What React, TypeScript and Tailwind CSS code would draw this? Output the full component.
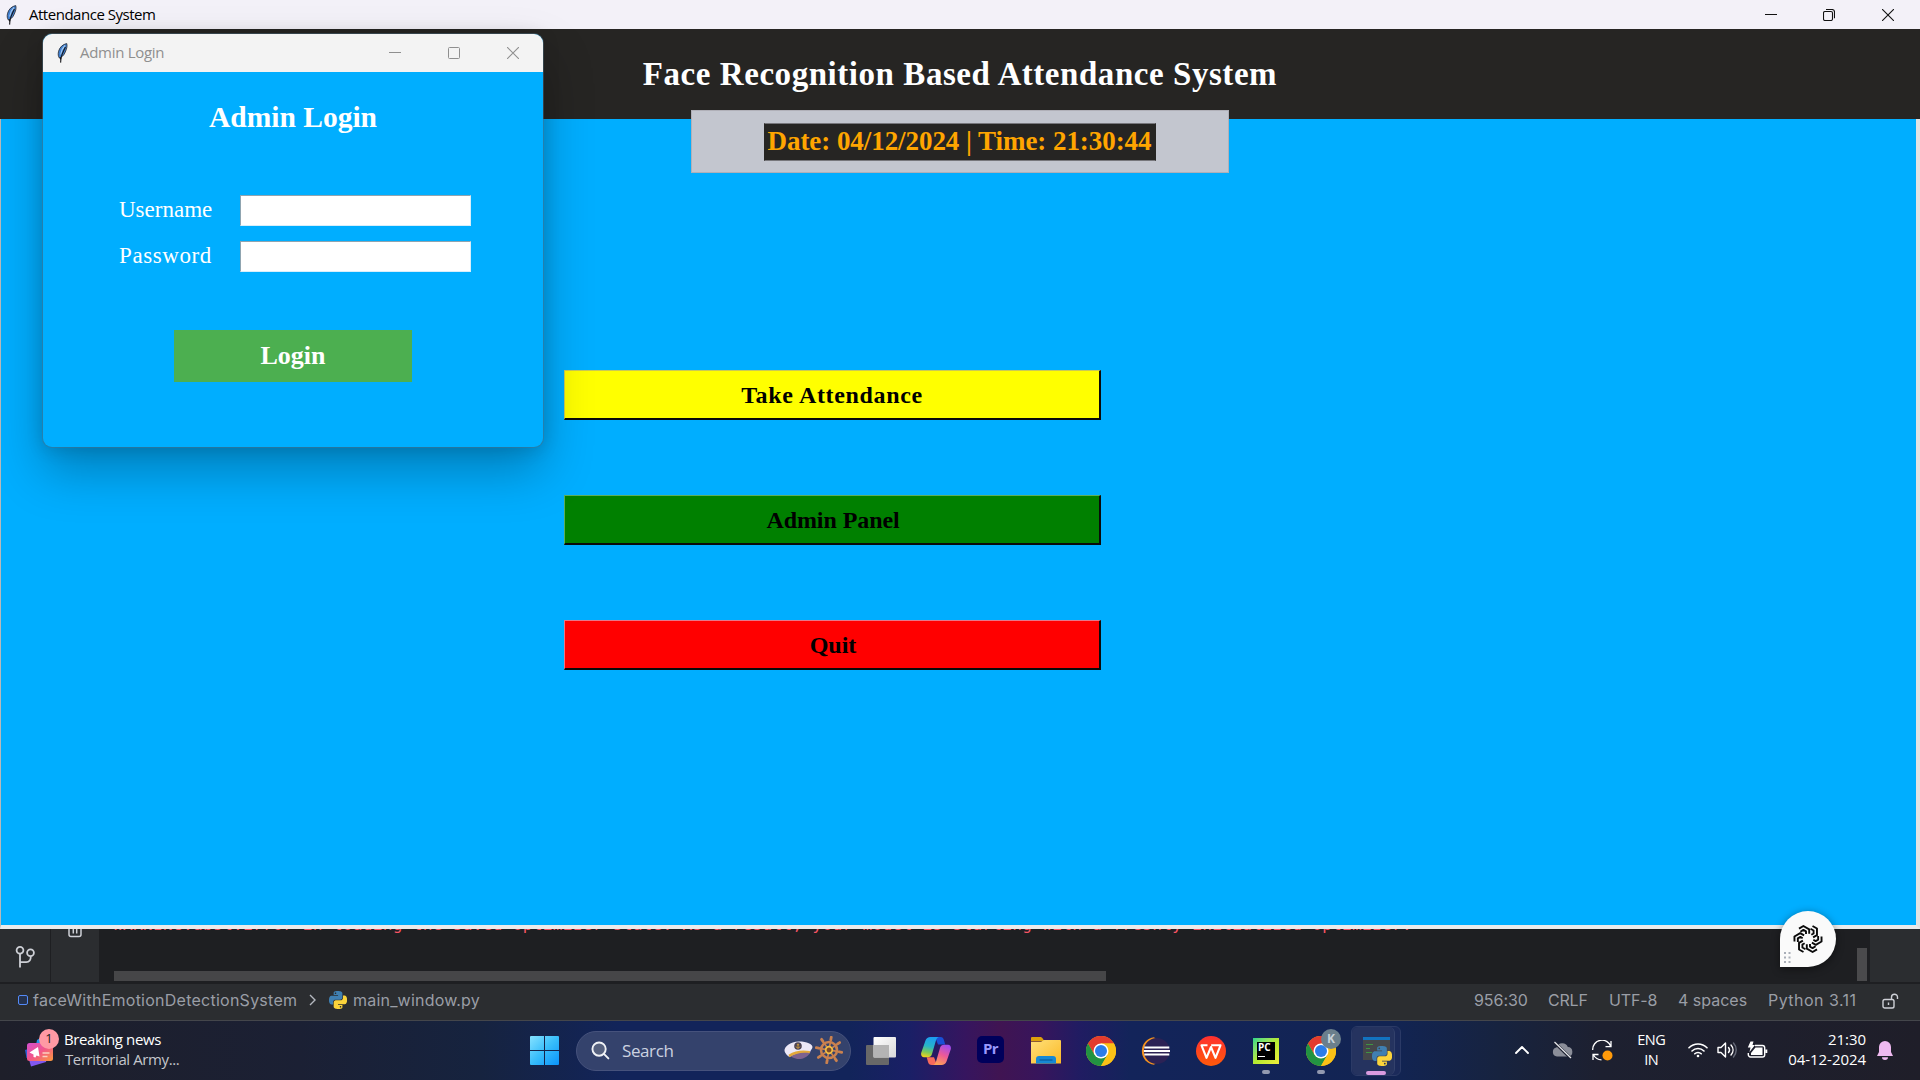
import React from "react";

type P = { className?: string };

const Feather = ({ className }: P) => (
  <svg className={className} viewBox="0 0 12 20" fill="none">
    <path d="M9.8.6C6 1.2 2.6 4.200 1.600 8.200c-.8 3-.4 5.300.8 6.800 2.400-.7 4.600-2.800 5.800-5.800C9.600 6 10.500 3.500 9.800.6Z" fill="#3f7fd0" stroke="#26282e" strokeWidth=".8" />
    <path d="M8 2.500C5.500 5 4.200 8 3.600 11.500" stroke="#a9cdf3" strokeWidth="1.100" />
    <path d="M8.400 4C6.600 8 4.800 11 4 15l-.4 4.600" stroke="#15161a" strokeWidth="1.100" />
    <path d="M2.400 14.500l1.200 2.800 1-2.600Z" fill="#15161a" />
  </svg>
);

const Python = ({ className }: P) => (
  <svg className={className} viewBox="0 0 24 24">
    <path fill="#3f7fb1" d="M14.25.18l.9.2.73.26.59.3.45.32.34.34.25.34.16.33.1.3.04.26.02.2-.01.13V8.500l-.05.63-.13.55-.21.46-.26.38-.3.31-.33.25-.35.19-.35.14-.33.1-.3.07-.26.04-.21.02H8.770l-.69.05-.59.14-.5.22-.41.27-.33.32-.27.35-.2.36-.15.37-.1.35-.07.32-.04.27-.02.21v3.060H3.170l-.21-.03-.28-.07-.32-.12-.35-.18-.36-.26-.36-.36-.35-.46-.32-.59-.28-.73-.21-.88-.14-1.050L0 11.970l.06-1.220.16-1.040.24-.87.32-.71.36-.57.4-.44.42-.33.42-.24.4-.16.36-.1.32-.05.24-.01h.16l.06.010h8.160v-.83H6.240l-.01-2.750-.02-.37.05-.34.11-.31.17-.28.25-.26.31-.23.38-.2.44-.18.51-.15.58-.12.64-.1.71-.06.77-.04.84-.02 1.270.05 1.070.13zm-6.300 1.980l-.23.33-.08.41.08.410.23.34.33.22.41.09.41-.09.33-.22.23-.34.08-.41-.08-.41-.23-.33-.33-.22-.41-.09-.41.09-.33.22z" />
    <path fill="#fbd43b" d="M21.100 6.110l.28.060.32.120.35.180.36.270.36.350.35.470.32.590.28.730.21.880.14 1.040.05 1.230-.06 1.230-.16 1.040-.24.860-.32.710-.36.570-.4.450-.42.330-.42.240-.4.160-.36.090-.32.050-.24.020-.16-.010h-8.220v.820h5.840l.010 2.760.020.360-.05.340-.11.310-.17.290-.25.250-.31.240-.38.200-.44.170-.51.150-.58.130-.64.090-.71.070-.77.040-.84.010-1.270-.04-1.070-.14-.9-.2-.73-.25-.59-.3-.45-.33-.34-.34-.25-.34-.16-.33-.1-.3-.04-.25-.02-.2.010-.13v-5.340l.05-.64.13-.54.21-.46.26-.38.3-.32.33-.24.35-.2.35-.14.33-.1.3-.06.26-.04.21-.02.130-.010h5.840l.69-.05.59-.14.5-.21.41-.28.33-.32.27-.35.2-.36.15-.36.1-.35.07-.32.04-.28.020-.21V6.070h2.090l.14.010zm-6.470 14.250l-.23.330-.08.410.08.410.23.330.33.230.41.080.41-.08.33-.23.23-.33.08-.41-.08-.41-.23-.33-.33-.23-.41-.08-.41.080-.33.230z" />
  </svg>
);

const Chrome = ({ className }: P) => (
  <svg className={className} viewBox="0 0 30 30">
    <circle cx="15" cy="15" r="15" fill="#fbc116" />
    <path d="M2 7.500A15 15 0 0 1 28 7.500H15L8.500 18.750Z" fill="#e33b2e" />
    <path d="M2 7.500A15 15 0 0 0 15 30l6.500-11.250H8.500Z" fill="#229342" />
    <path d="M28 7.500H15v7.500l6.500 3.750L15 30A15 15 0 0 0 28 7.500Z" fill="#fbc116" />
    <circle cx="15" cy="15" r="7.500" fill="#fff" />
    <circle cx="15" cy="15" r="6" fill="#2b7de9" />
  </svg>
);

const Minimize = () => (
  <svg className="h-3 w-3" viewBox="0 0 12 12" stroke="currentColor"><path d="M0 5.500h12" /></svg>
);
const Maximize = () => (
  <svg className="h-3 w-3" viewBox="0 0 12 12" fill="none" stroke="currentColor"><rect x=".5" y=".5" width="11" height="11" rx="1" /></svg>
);
const Restore = () => (
  <svg className="h-3 w-3" viewBox="0 0 12 12" fill="none" stroke="currentColor" strokeWidth="1.100">
    <rect x=".5" y="2.500" width="9" height="9" rx="1.500" />
    <path d="M3 .5h6a2.500 2.500 0 0 1 2.500 2.500v6.300" />
  </svg>
);
const Close = () => (
  <svg className="h-3 w-3" viewBox="0 0 12 12" stroke="currentColor" strokeWidth="1.100"><path d="M0 0l12 12M12 0L0 12" /></svg>
);

const menu = [
  { label: "Take Attendance", cls: "bg-[#ffff00] border-t-[#c9c956] border-l-[#c9c956] tracking-[0.66px]" },
  { label: "Admin Panel", cls: "bg-[#008000] border-t-[#5cae5c] border-l-[#5cae5c] tracking-[-0.08px] pl-[2px]" },
  { label: "Quit", cls: "bg-[#ff0000] border-t-[#e8788a] border-l-[#e8788a] pl-[2px]" },
];

function MainWindow() {
  return (
    <section className="flex h-[929px] flex-col">
      <div className="flex h-[29px] shrink-0 items-center bg-[#f3f1f8] pl-[6px] pr-[26px] font-['Open_Sans',sans-serif] text-black">
        <Feather className="h-5 w-3" />
        <span className="ml-[11px] text-[15px] leading-none tracking-[-0.48px]">Attendance System</span>
        <div className="ml-auto flex text-[#111]">
          <Minimize />
          <span className="ml-[46px]"><Restore /></span>
          <span className="ml-[47px]"><Close /></span>
        </div>
      </div>
      <header className="flex h-[90px] shrink-0 items-center justify-center bg-[#262523]">
        <h1 className="text-[33px] font-bold leading-none tracking-[0.55px] text-white">Face Recognition Based Attendance System</h1>
      </header>
      <main className="flex flex-1 flex-col border-b-4 border-l-[1.500px] border-r-4 border-b-[#ebebeb] border-l-[#b9b9b9] border-r-[#e3e3e3] bg-[#00aeff]">
        <div className="z-10 -mt-[9px] ml-[690px] flex h-[63px] w-[538px] items-center justify-center border border-[#b0b0b8] bg-[#c3c6cf]">
          <div className="-ml-px flex h-[38px] w-[392px] items-center justify-center border border-[#77777c] border-x-[#262523] bg-[#262523] text-[27px] font-bold leading-none tracking-[-0.06px] text-[#ffa500]">
            Date: 04/12/2024 | Time: 21:30:44
          </div>
        </div>
        <nav className="ml-[563px] mt-[197px] flex w-[537px] flex-col gap-[75px]">
          {menu.map((m) => (
            <button key={m.label} className={"flex h-[50px] items-center justify-center border-b-2 border-l border-r-2 border-t border-b-[#0a0a0a] border-r-[#0a0a0a] text-[24px] font-bold leading-none text-black " + m.cls}>
              {m.label}
            </button>
          ))}
        </nav>
      </main>
    </section>
  );
}

function LoginWindow() {
  return (
    <section className="absolute left-[43px] top-[34px] z-20 flex h-[413px] w-[500px] flex-col overflow-hidden rounded-[9px] bg-[#00aeff] shadow-[0_0_0_1px_rgba(80,110,130,0.45),0_2px_18px_rgba(0,0,0,0.14),0_24px_50px_rgba(0,0,0,0.27)]">
      <div className="flex h-[38px] shrink-0 items-center bg-[#f3f3f3] pb-px pl-[14px] pr-6 font-['Open_Sans',sans-serif] text-[#8f8f8f]">
        <Feather className="h-5 w-3" />
        <span className="ml-[11px] text-[15px] leading-none tracking-[-0.3px]">Admin Login</span>
        <div className="ml-auto flex gap-[47px]">
          <Minimize />
          <Maximize />
          <Close />
        </div>
      </div>
      <h2 className="mt-[30px] text-center text-[29.500px] font-bold leading-[30px] text-white">Admin Login</h2>
      <form className="ml-[76px] mt-[63px] flex flex-col gap-[15px] text-[23px] text-white">
        <label className="flex h-[31px] items-center">
          <span className="w-[121px] pb-[2px] leading-none">Username</span>
          <span className="h-[31px] w-[231px] border border-[#d8eefa] border-l-[#8fa4b0] border-t-[#8fa4b0] bg-white" />
        </label>
        <label className="flex h-[31px] items-center">
          <span className="w-[121px] pb-[2px] leading-none tracking-[0.6px]">Password</span>
          <span className="h-[31px] w-[231px] border border-[#d8eefa] border-l-[#8fa4b0] border-t-[#8fa4b0] bg-white" />
        </label>
      </form>
      <button className="ml-[131px] mt-[58px] flex h-[52px] w-[238px] items-center justify-center bg-[#4caf50] text-[26px] font-bold leading-none text-white">Login</button>
    </section>
  );
}

function Editor() {
  return (
    <section className="flex h-[92px] flex-col bg-[#1e1f22] font-['Inter',sans-serif]">
      <div className="flex h-[53px] overflow-hidden">
        <div className="flex w-[50px] flex-col items-center bg-[#2b2d30] pt-[16px]">
          <svg className="h-6 w-6" viewBox="0 0 24 24" fill="none" stroke="#ced0d6" strokeWidth="1.800">
            <circle cx="7" cy="5.200" r="3.400" />
            <circle cx="17.500" cy="7.800" r="3.400" />
            <path d="M7 8.500v14M17.800 11.500c0 4-1.800 5.600-4.500 5.600H7" />
          </svg>
        </div>
        <div className="ml-px flex w-12 justify-center bg-[#2b2d30]">
          <svg className="h-[9px] w-4" viewBox="0 0 16 9" fill="none" stroke="#ced0d6" strokeWidth="1.500">
            <path d="M2 -2v7.500a2 2 0 0 0 2 2h8a2 2 0 0 0 2-2V-2M6.300 -1v5.500M9.700 -1v5.500" />
          </svg>
        </div>
        <div className="flex flex-1 flex-col overflow-hidden pl-[14px]">
          <div className="-mt-[12px] h-4 whitespace-pre font-['DejaVu_Sans_Mono',monospace] text-[16px] leading-4 tracking-[0.36px] text-[#f75464]">
            WARNING:absl:Error in loading the saved optimizer state. As a result, your model is starting with a freshly initialized optimizer.
          </div>
          <div className="ml-px mt-[38px] h-[10px] w-[992px] bg-[#464648]" />
        </div>
        <div className="mr-[3px] mt-[19px] h-[33px] w-[10px] bg-[#4a4a4c]" />
        <div className="w-[50px] bg-[#2b2d30]" />
      </div>
      <div className="mt-[2px] flex h-[37px] items-center border-b border-[#44464b] bg-[#2b2d30] pb-[4px] text-[16px] leading-none text-[#9a9ea6]">
        <span className="ml-[18px] h-[10px] w-[10px] rounded-[2px] border-[1.500px] border-[#548af7] bg-[#25324d]" />
        <span className="ml-[5px] w-[264px] tracking-[0.25px]">faceWithEmotionDetectionSystem</span>
        <svg className="ml-[12px] h-3 w-[7px]" viewBox="0 0 7 12" fill="none" stroke="#b4b8bf" strokeWidth="1.400"><path d="M1 1l5 5-5 5" /></svg>
        <Python className="ml-[13px] h-[18px] w-[18px]" />
        <span className="ml-[6px] tracking-[0.2px]">main_window.py</span>
        <div className="ml-auto flex items-center">
          <span className="w-[74px] tracking-[-0.05px]">956:30</span>
          <span className="w-[61px] tracking-[-0.2px]">CRLF</span>
          <span className="w-[69px] tracking-[-0.15px]">UTF-8</span>
          <span className="w-[90px]">4 spaces</span>
          <span className="w-[114px] tracking-[0.46px]">Python 3.11</span>
          <svg className="mr-[21px] mt-[2px] h-4 w-[17px]" viewBox="0 0 17 16" fill="none" stroke="#ced0d6" strokeWidth="1.400">
            <rect x="1" y="6.500" width="11" height="8.500" rx="1.800" />
            <path d="M9.500 6.500V4.200a3 3 0 0 1 6 0V6M6.500 9.500v2.600" />
          </svg>
        </div>
      </div>
    </section>
  );
}

function AssistantBadge() {
  return (
    <div className="absolute left-[1780px] top-[911px] z-20 flex h-14 w-14 items-center justify-center rounded-full rounded-bl-[3px] bg-[#fafafa] shadow-[0_2px_8px_rgba(0,0,0,0.45)]">
      <svg className="-mt-px h-[30px] w-[30px]" viewBox="-15 -15 30 30" fill="none" stroke="#0a0a0a" strokeWidth="1.900" strokeLinejoin="round">
        {[0, 60, 120, 180, 240, 300].map((a) => (
          <g key={a} transform={`rotate(${a})`}>
            <path d="M-9 -10.400L-4.600 -13L1.200 -9.700V-5.200" />
            <path d="M-7.600 -7.300L-4.600 -9.100L-2 -7.600V-5" />
          </g>
        ))}
      </svg>
      <svg className="absolute bottom-[4px] left-[4px] h-[11px] w-[7px]" viewBox="0 0 7 11" fill="#a9aeb8">
        {[0, 4.500, 9].map((y) => (
          <g key={y}><rect x="0" y={y} width="2" height="2" /><rect x="4.500" y={y} width="2" height="2" /></g>
        ))}
      </svg>
    </div>
  );
}

const Windows = () => (
  <svg className="h-[29px] w-[29px]" viewBox="0 0 29 29">
    <defs><linearGradient id="win" x2="1" y2="1"><stop stopColor="#86e2ff" /><stop offset=".5" stopColor="#38bdfb" /><stop offset="1" stopColor="#0a93fb" /></linearGradient></defs>
    <path fill="url(#win)" d="M1 0h13v14H0V1a1 1 0 0 1 1-1ZM15 0h13a1 1 0 0 1 1 1v13H15ZM0 15h14v14H1a1 1 0 0 1-1-1ZM15 15h14v13a1 1 0 0 1-1 1H15Z" />
  </svg>
);

const CaptainHat = () => (
  <svg className="h-[19px] w-[29px]" viewBox="0 0 29 19">
    <path d="M4 12c4 7 16 9 22 0l1-3Z" fill="#7d628f" />
    <path d="M.5 10C0 6 6 .5 15 .5c8 0 13.500 2.500 13.500 5.500 0 2-2 3-2.500 5-7-1-14 0-20.500 5C3.500 15 1 12.500.5 10Z" fill="#ece8f7" />
    <path d="M4.500 13.800C11 9.500 18 8.800 26 10l-.3 2.200C18 11 11 12.500 5.500 16.200Z" fill="#e2a83a" />
    <circle cx="14" cy="5" r="3.800" fill="#4b4354" />
    <path d="M14 2.500v5M12 5.500c.5 2 3.500 2 4 0M12.800 3.800h2.400" stroke="#e2a83a" strokeWidth=".8" fill="none" />
  </svg>
);

const Wheel = () => (
  <svg className="h-[28px] w-[28px]" viewBox="-14 -14 28 28" fill="none" stroke="#c9814f">
    {[10, 55, 100, 145, 190, 235, 280, 325].map((a) => (
      <g key={a} transform={`rotate(${a})`}>
        <path d="M0 -4V-11" strokeWidth="1.700" />
        <path d="M0 -10.500V-13" strokeWidth="2.800" strokeLinecap="round" />
      </g>
    ))}
    <circle r="8" strokeWidth="2.600" />
    <circle r="3.300" stroke="#f0bd45" strokeWidth="1.800" fill="#7c4a2c" />
  </svg>
);

const TaskView = () => (
  <svg className="h-7 w-[30px]" viewBox="0 0 30 28">
    <defs><linearGradient id="tv" x2="1" y2="1"><stop stopColor="#fff" /><stop offset="1" stopColor="#d8d8d8" /></linearGradient></defs>
    <rect x="0" y="8" width="23" height="20" rx="1" fill="#686868" />
    <rect x="7.500" y="0" width="22.500" height="20.500" rx="1" fill="url(#tv)" />
    <path d="M7.500 8H23v12.500H7.500Z" fill="#b4b4b4" />
  </svg>
);

const Copilot = () => (
  <svg className="h-[28px] w-[30px]" viewBox="0 0 30 28">
    <defs>
      <linearGradient id="cp1" x1=".5" x2=".3" y2="1"><stop stopColor="#1c9df0" /><stop offset=".45" stopColor="#28b4c8" /><stop offset=".75" stopColor="#7cc95a" /><stop offset="1" stopColor="#f2d21c" /></linearGradient>
      <linearGradient id="cp2" x1=".7" x2=".3" y2="1"><stop stopColor="#a24bee" /><stop offset=".5" stopColor="#ee5a96" /><stop offset="1" stopColor="#fca355" /></linearGradient>
    </defs>
    <path d="M14 0h5.500c2 0 2.800 1 3.400 3l1.300 4.500H17Z" fill="#1a4fd6" />
    <path d="M16 28h-5c-2.500 0-3.500-1-4-3l-1.300-4.800H13Z" fill="#f66a5c" />
    <path d="M9.500 0H18c-1.800.5-2.600 2-3.200 4L11 17c-.7 2.200-2 3.300-4.200 3.300H3C.6 20.300-.4 18 .3 15.500L4.500 3.500C5.300 1.200 7 0 9.500 0Z" fill="url(#cp1)" />
    <path d="M20.500 28H12c1.800-.5 2.600-2 3.200-4L19 11c.7-2.200 2-3.300 4.200-3.300H27c2.400 0 3.400 2.300 2.700 4.800l-4.200 12c-.8 2.300-2.500 3.500-5 3.500Z" fill="url(#cp2)" />
  </svg>
);

const Folder = () => (
  <svg className="h-[27px] w-[30px]" viewBox="0 0 30 27">
    <defs><linearGradient id="fd" x2="1" y2="1"><stop stopColor="#ffe07a" /><stop offset="1" stopColor="#fbb926" /></linearGradient></defs>
    <path d="M0 1a1 1 0 0 1 1-1h8c1.500 0 2 .5 3 2l1.500 2.500H0Z" fill="#dda10c" />
    <path d="M0 5h9.500c1.500 0 2.200-2 4-2H29a1 1 0 0 1 1 1v22.500H0Z" fill="url(#fd)" />
    <path d="M5 26.500V22a3 3 0 0 1 3-3h14a3 3 0 0 1 3 3v4.500Z" fill="#1688d4" />
    <path d="M8.500 23h13" stroke="#0a5a9c" strokeWidth="1.200" />
  </svg>
);

const Eclipse = () => (
  <svg className="-ml-[2px] h-[28px] w-[30px]" viewBox="0 0 30 28">
    <path d="M14 .3A13.800 13.800 0 0 0 14 27.700L16 26V2Z" fill="#f7941e" />
    <circle cx="16.800" cy="14" r="13" fill="#2c2255" />
    <path d="M4.300 10.600h25M3.800 14H30M4.300 17.400h25" stroke="#fff" strokeWidth="2" />
  </svg>
);

const Wps = () => (
  <svg className="h-[30px] w-[30px]" viewBox="0 0 30 30">
    <defs><linearGradient id="wps" y1="0" x2="0" y2="1"><stop stopColor="#ff3030" /><stop offset="1" stopColor="#ff5a0a" /></linearGradient></defs>
    <circle cx="15" cy="15" r="15" fill="url(#wps)" />
    <path d="M11.500 9.300H5.500l5 12.500L15 11l4.500 10.800 5-12.500h-9.300" fill="none" stroke="#fff" strokeWidth="2.100" strokeLinejoin="round" />
  </svg>
);

const PyCharm = () => (
  <div className="flex h-[26px] w-[26px] items-center justify-center bg-linear-to-br from-[#21d789] via-[#b4ea30] to-[#f0ee3a]">
    <div className="flex h-[18px] w-[18px] flex-col justify-between bg-black p-[1.500px] font-['Open_Sans',sans-serif] text-[10px] font-bold leading-[9px] text-white">
      PC
      <span className="mb-px h-[1.500px] w-[7px] bg-white" />
    </div>
  </div>
);

const PythonTerminal = () => (
  <div className="relative h-7 w-7">
    <svg className="h-[23px] w-[27px]" viewBox="0 0 27 23">
      <rect width="27" height="23" fill="#45474b" />
      <rect width="27" height="3" fill="#1273c0" />
      <path d="M3 7.500h7M3 11.500h4M3 15.500h6" stroke="#3f9442" strokeWidth="1.200" />
    </svg>
    <Python className="absolute left-[9px] top-[9px] h-[20px] w-[20px]" />
  </div>
);

function Slot({ children, mark }: { children: React.ReactNode; mark?: boolean }) {
  return (
    <div className="relative flex h-[59px] w-[55px] items-center justify-center">
      {children}
      {mark && <span className="absolute bottom-[6px] h-1 w-2 rounded-full bg-[#9299b0]" />}
    </div>
  );
}

function Taskbar() {
  return (
    <footer className="relative flex h-[59px] items-center bg-[linear-gradient(90deg,#1e1f2a_0px,#1b2034_300px,#16233f_480px,#12245a_620px,#12245a_850px,#1a1f66_910px,#36155f_965px,#401452_1000px,#37155c_1040px,#201c62_1080px,#13245a_1130px,#122452_1400px,#17233f_1500px,#1d2030_1600px,#1f1e29_1920px)] font-['Open_Sans',sans-serif] text-white">
      <div className="relative -mt-px ml-[25px] h-[40px] w-[34px]">
        <svg className="h-full w-full" viewBox="0 0 34 40">
          <defs><linearGradient id="news" x2="1" y2="1"><stop stopColor="#d44fd0" /><stop offset=".5" stopColor="#f2568a" /><stop offset="1" stopColor="#fb9a3a" /></linearGradient></defs>
          <path d="M12 10l8-5 6 2v8H11Z" fill="#2493e8" />
          <path d="M0 20l3-1v9H1.500Z" fill="#2b5fd0" />
          <path d="M3 26h19l-1 6-15 4.500Z" fill="#8158f0" />
          <rect x="2" y="13" width="26" height="18" rx="2.500" fill="url(#news)" />
          <path d="M4.500 22.500l8.500-5.500 1.500 9.500-3-1-1 2-2-.5v-2.500Z" fill="#fff" />
          <path d="M17.500 23h7M17.500 26.500h5" stroke="#fbd0c0" strokeWidth="1.500" />
        </svg>
        <span className="absolute -top-[1.500px] left-[14px] flex h-5 w-5 items-center justify-center rounded-full bg-[#ff99a4] text-[13px] leading-none text-[#222]">1</span>
      </div>
      <div className="-mt-1 ml-[5px] w-[150px] text-[15px] leading-5">
        <p className="tracking-[-0.38px]">Breaking news</p>
        <p className="pl-px tracking-[-0.4px] text-[#c4c6cc]">Territorial Army...</p>
      </div>
      <div className="ml-[316px]"><Windows /></div>
      <div className="ml-[17px] flex h-10 w-[275px] items-center rounded-full border border-[#46527c] bg-[#34426c] pb-px pl-[14px] pr-[7px]">
        <svg className="h-[19px] w-[19px]" viewBox="0 0 20 20" fill="#56617f" stroke="#f0f2f6" strokeWidth="2" strokeLinecap="round">
          <circle cx="8.500" cy="8.500" r="7" /><path d="M13.800 13.800L18.300 18.300" />
        </svg>
        <span className="ml-3 text-[17px] leading-none tracking-[-0.4px] text-[#ccd2e0]">Search</span>
        <div className="ml-auto flex items-center gap-[2px]"><CaptainHat /><Wheel /></div>
      </div>
      <div className="ml-[2px] flex">
        <Slot><TaskView /></Slot>
        <Slot><Copilot /></Slot>
        <Slot><span className="-mt-[3px] flex h-[27px] w-[27px] items-center justify-center rounded-[5px] bg-[#00005b] pb-[2px] text-[15px] font-bold leading-none tracking-[-0.5px] text-[#9999ff]">Pr</span></Slot>
        <Slot><Folder /></Slot>
        <Slot><Chrome className="h-[30px] w-[30px]" /></Slot>
        <Slot><Eclipse /></Slot>
        <Slot><Wps /></Slot>
        <Slot mark><PyCharm /></Slot>
        <Slot mark>
          <Chrome className="h-[30px] w-[30px]" />
          <span className="absolute left-[28px] top-[8px] flex h-5 w-5 items-center justify-center rounded-full bg-[#6b7f8c] text-[12px] font-bold leading-none text-[#c8d2d8]">K</span>
        </Slot>
        <div className="relative ml-[3px] h-[50px] w-[50px] self-center rounded-md border border-[#2b3a66] bg-[#1b2a5a]">
          <div className="flex h-full w-[43px] items-center justify-center rounded-md border-r border-[#33416b] bg-[#25335f] pl-[7px]"><PythonTerminal /></div>
          <span className="absolute bottom-0 left-[14px] h-1 w-5 rounded-full bg-[#d99be0]" />
        </div>
      </div>
      <div className="ml-auto flex items-center pb-px">
        <svg className="h-2 w-[14px]" viewBox="0 0 14 8" fill="none" stroke="#fff" strokeWidth="1.900" strokeLinecap="round" strokeLinejoin="round"><path d="M1 7l6-6 6 6" /></svg>
        <svg className="ml-[23px] h-[18px] w-[21px]" viewBox="0 0 21 18">
          <path d="M5 15.500a4.500 4.500 0 0 1-.5-8.900A6 6 0 0 1 15.800 6 4.800 4.800 0 0 1 16.500 15.500Z" fill="#8b8e99" />
          <path d="M2.500 1.500l16 15.500" stroke="#1c2030" strokeWidth="3" /><path d="M2.500 1l16.500 16" stroke="#e8e8ec" strokeWidth="1.300" />
        </svg>
        <svg className="ml-[19px] h-[21px] w-[21px]" viewBox="0 0 21 21" fill="none" stroke="#fff" strokeWidth="1.300">
          <path d="M.7 10A9.300 9.300 0 0 1 18.800 6.500M19 1v5.700h-5.500M1 20v-5.500h5.500M1.500 15a9.500 9.500 0 0 0 8 4.800" />
          <circle cx="15.500" cy="15.500" r="5" fill="#ff9a0a" stroke="none" />
        </svg>
        <div className="ml-[20px] w-9 text-center text-[14.500px] leading-5 tracking-[-0.5px]"><p>ENG</p><p>IN</p></div>
        <svg className="ml-[19px] h-4 w-5" viewBox="0 0 20 16" fill="none" stroke="#fff" strokeWidth="1.600" strokeLinecap="round">
          <path d="M1 5.800a12.700 12.700 0 0 1 18 0M4 9a8.500 8.500 0 0 1 12 0M6.800 11.800a4.500 4.500 0 0 1 6.400 0" /><circle cx="10" cy="14" r="1.300" fill="#fff" stroke="none" />
        </svg>
        <svg className="ml-[9px] h-[18px] w-5" viewBox="0 0 20 18" fill="none" stroke="#fff" strokeWidth="1.400" strokeLinejoin="round" strokeLinecap="round">
          <path d="M1 6.500h3L8.500 2v14L4 11.500H1ZM11.500 6.500c1.300 1.500 1.300 3.500 0 5M14 4c2.700 3 2.700 7 0 10" /><path d="M16.500 2c3.600 4 3.600 10 0 14" stroke="#666a78" />
        </svg>
        <svg className="ml-[10px] h-[18px] w-[21px]" viewBox="0 0 21 18" fill="none" stroke="#fff" strokeWidth="1.400">
          <path d="M8 4.500h7.500A2.200 2.200 0 0 1 17.700 6.700v7.100a2.200 2.200 0 0 1-2.200 2.200H3.500A2.200 2.200 0 0 1 1.300 13.800V12" />
          <path d="M8.500 6.500H15.500V14H4V12Z" fill="#fff" stroke="none" /><path d="M19.300 8.500v3.500" strokeWidth="2" />
          <path d="M3.500 .5h3L5.500 4H8L2.500 11l1-4.500H.8Z" fill="#fff" stroke="none" />
        </svg>
        <div className="-mt-[3px] ml-[20px] text-right text-[15px] leading-5 tracking-[-0.05px]"><p>21:30</p><p>04-12-2024</p></div>
        <svg className="ml-[11px] mr-[27px] h-[19px] w-4" viewBox="0 0 16 19" fill="#efb9f0">
          <path d="M8 0a6 6 0 0 1 6 6v5l2 4H0l2-4V6a6 6 0 0 1 6-6ZM5 16.300h6a3 2.700 0 0 1-6 0Z" />
        </svg>
      </div>
    </footer>
  );
}

export default function App() {
  return (
    <div className="relative flex h-[1080px] w-[1920px] flex-col overflow-hidden font-['Liberation_Serif',serif]">
      <MainWindow />
      <LoginWindow />
      <Editor />
      <AssistantBadge />
      <Taskbar />
    </div>
  );
}
